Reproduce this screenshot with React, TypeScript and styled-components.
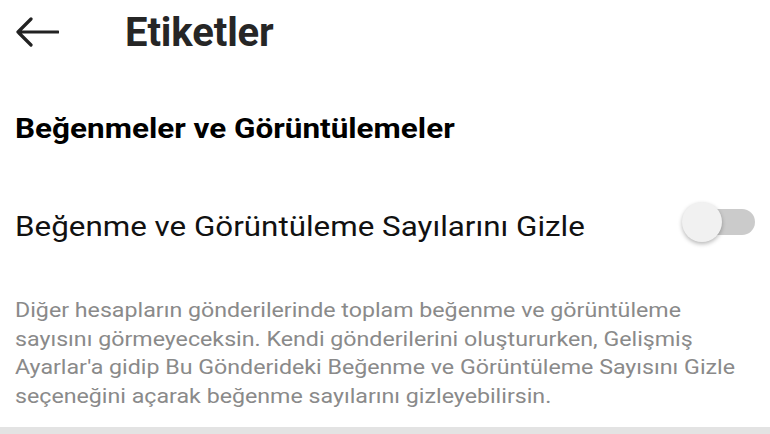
import React, { useState } from 'react'
import styled, { createGlobalStyle } from 'styled-components'

const GlobalStyle = createGlobalStyle`
  html, body {
    margin: 0;
    padding: 0;
    background: #ffffff;
    font-family: Roboto, "Noto Sans", sans-serif;
  }
`

const Page = styled.div`
  width: 770px;
  height: 434px;
  display: flex;
  flex-direction: column;
  overflow: hidden;
  background: #fff;
`

const Header = styled.header`
  height: 64px;
  display: flex;
  align-items: center;
  padding: 0 15px;
  gap: 66px;
`

const BackButton = styled.button`
  border: none;
  background: none;
  padding: 0;
  width: 44px;
  height: 34px;
  display: flex;
  align-items: center;
  justify-content: center;
  color: #222;
  cursor: pointer;
`

const Title = styled.h1`
  margin: 0;
  font-size: 40px;
  font-weight: 700;
  color: #262626;
  letter-spacing: -0.1px;
`

const Section = styled.section`
  padding: 0 15px;
  display: flex;
  flex-direction: column;
`

// the screenshot's text is a little wider than Roboto, so stretch it
const SectionTitle = styled.h2`
  margin: 49px 0 0;
  font-size: 27px;
  font-weight: 700;
  color: #000;
  line-height: 32px;
  transform: scaleX(1.165);
  transform-origin: left center;
  white-space: nowrap;
`

const Row = styled.div`
  margin-top: 57px;
  display: flex;
  align-items: center;
  justify-content: space-between;
  height: 40px;
`

const RowLabel = styled.span`
  padding-top: 9px;
  font-size: 28.5px;
  color: #111;
  transform: scaleX(1.1);
  transform-origin: left center;
  white-space: nowrap;
`

const Switch = styled.button<{ $on: boolean }>`
  position: relative;
  width: 73px;
  height: 40px;
  border: none;
  background: none;
  padding: 0;
  margin-right: 0;
  cursor: pointer;

  &::before {
    content: '';
    position: absolute;
    right: 0;
    top: 7px;
    width: 56px;
    height: 26px;
    border-radius: 13px;
    background: ${p => (p.$on ? '#9fd0f5' : '#cbcbcb')};
  }

  &::after {
    content: '';
    position: absolute;
    top: 0;
    left: ${p => (p.$on ? '33px' : '0')};
    width: 40px;
    height: 40px;
    border-radius: 50%;
    background: ${p => (p.$on ? '#0095f6' : '#f1f1f1')};
    box-shadow: 0 2px 4px rgba(0, 0, 0, 0.28);
  }
`

const Description = styled.p`
  margin: 54px 0 0;
  font-size: 20px;
  line-height: 28.5px;
  color: #8a8a8a;
  transform: scaleX(1.16);
  transform-origin: left top;
  white-space: nowrap;
`

const Divider = styled.div`
  margin-top: auto;
  height: 7px;
  background: #e3e3e3;
`

export default function App () {
  const [hidden, setHidden] = useState(false)

  return (
    <Page>
      <GlobalStyle />
      <Header>
        <BackButton aria-label="Geri">
          <svg width="44" height="32" viewBox="0 0 44 32" fill="none">
            <path d="M43 16H3M16 3L3 16l13 13" stroke="currentColor" strokeWidth="3.2" strokeLinecap="round" strokeLinejoin="round" />
          </svg>
        </BackButton>
        <Title>Etiketler</Title>
      </Header>
      <Section>
        <SectionTitle>Beğenmeler ve Görüntülemeler</SectionTitle>
        <Row>
          <RowLabel>Beğenme ve Görüntüleme Sayılarını Gizle</RowLabel>
          <Switch $on={hidden} onClick={() => setHidden(!hidden)} aria-label="Gizle" />
        </Row>
        <Description>
          Diğer hesapların gönderilerinde toplam beğenme ve görüntüleme<br />
          sayısını görmeyeceksin. Kendi gönderilerini oluştururken, Gelişmiş<br />
          Ayarlar'a gidip Bu Gönderideki Beğenme ve Görüntüleme Sayısını Gizle<br />
          seçeneğini açarak beğenme sayılarını gizleyebilirsin.
        </Description>
      </Section>
      <Divider />
    </Page>
  )
}
